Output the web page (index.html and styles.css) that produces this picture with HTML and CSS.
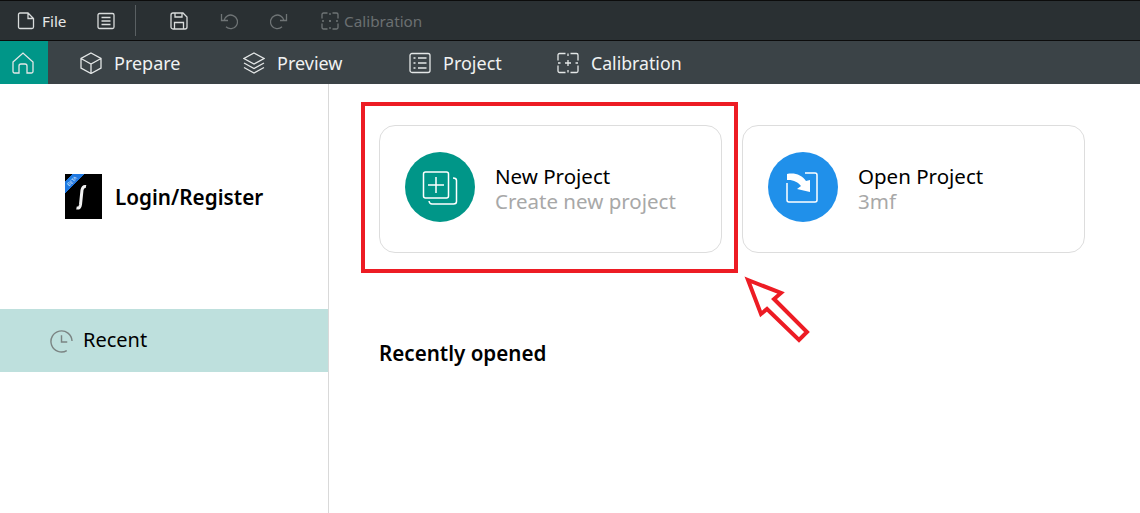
FILE: index.html
```html
<!DOCTYPE html>
<html lang="en">

<head>
  <meta charset="UTF-8">
  <title>Home</title>
  <link rel="stylesheet" href="styles.css">
</head>

<body>
  <!-- top toolbar -->
  <div class="toolbar">
    <div class="tool tool-file">
      <svg class="ico" viewBox="0 0 18 18"><path d="M1.500 2.500a1.500 1.500 0 0 1 1.500-1.500h8l5.500 5.500v8.500a1.500 1.500 0 0 1-1.500 1.500h-12a1.500 1.500 0 0 1-1.500-1.500zM11 1v5.500h5.500"/></svg>
      <span>File</span>
    </div>
    <div class="tool tool-list">
      <svg class="ico" viewBox="0 0 18 18"><rect x="1" y="1.500" width="16" height="15" rx="1.500"/><path d="M4.500 5.500h9M4.500 9h9M4.500 12.500h9"/></svg>
    </div>
    <div class="divider"></div>
    <div class="tool tool-save">
      <svg class="ico" viewBox="0 0 18 18"><path d="M1 3a2 2 0 0 1 2-2h10l4 4v10a2 2 0 0 1-2 2H3a2 2 0 0 1-2-2zM5 1v4h7V1M4.500 17v-6.500h9V17"/></svg>
    </div>
    <div class="tool tool-undo off">
      <svg class="ico" viewBox="0 0 18 18"><path d="M4 8.500A6.800 6.800 0 1 1 6 14.800M1.500 2v6.500H8"/></svg>
    </div>
    <div class="tool tool-redo off">
      <svg class="ico" viewBox="0 0 18 18"><path d="M14 8.500A6.800 6.800 0 1 0 12 14.800M16.500 2v6.500H10"/></svg>
    </div>
    <div class="tool tool-calib off">
      <svg class="ico" viewBox="0 0 18 18"><path d="M6.500 1H2.500A1.500 1.500 0 0 0 1 2.500V6.500M11.500 1h4A1.500 1.500 0 0 1 17 2.500V6.500M6.500 17H2.500A1.500 1.500 0 0 1 1 15.500V11.500M11.500 17h4a1.500 1.500 0 0 0 1.500-1.500V11.500M8 9h2M9 8v2M9 1v2M9 15v2M1 9h2M15 9h2"/></svg>
      <span>Calibration</span>
    </div>
  </div>

  <!-- tabs -->
  <nav class="tabs">
    <div class="tab-home">
      <svg class="tab-ico" viewBox="0 0 22 22"><path d="M1 10 11 1l10 9v9.500a1.500 1.500 0 0 1-1.500 1.500H15v-7a2 2 0 0 0-2-2H9a2 2 0 0 0-2 2v7H2.500A1.500 1.500 0 0 1 1 19.500z"/></svg>
    </div>
    <div class="tab tab-prepare">
      <svg class="tab-ico" viewBox="0 0 22 22"><path d="M11 1l10 5.500v9.500l-10 5.500-10-5.500V6.500zM1 6.500l10 5.500 10-5.500M11 12v9"/></svg>
      <span>Prepare</span>
    </div>
    <div class="tab tab-preview">
      <svg class="tab-ico" viewBox="0 0 22 22"><path d="M11 1l10 5.500-10 5.500-10-5.500zM1 11l10 5.500 10-5.500M1 15.500 11 21l10-5.500"/></svg>
      <span>Preview</span>
    </div>
    <div class="tab tab-project">
      <svg class="tab-ico" viewBox="0 0 22 22"><rect x="1" y="1.500" width="20" height="19" rx="2"/><path d="M4.500 6h2M9 6h8.500M4.500 11h2M9 11h8.500M4.500 16h2M9 16h8.500"/></svg>
      <span>Project</span>
    </div>
    <div class="tab">
      <svg class="tab-ico" viewBox="0 0 22 22"><path d="M8.500 1.500H2.500a1.500 1.500 0 0 0-1.500 1.500v5.500M13.500 1.500h6a1.500 1.500 0 0 1 1.500 1.500v5.500M8.500 20.500H2.500a1.500 1.500 0 0 1-1.500-1.500v-5.500M13.500 20.500h6a1.500 1.500 0 0 0 1.500-1.500v-5.500M8 11h6M11 8v6M11 1.500v2.500M11 18v2.500M1 11h2.500M18.500 11H21"/></svg>
      <span class="tab-calib">Calibration</span>
    </div>
  </nav>

  <div class="page">
    <aside class="side">
      <div class="login">
        <div class="logo">
          <span class="beta">BETA</span>
          <svg class="logo-s" viewBox="0 0 37 45"><path d="M21 12.500c-2.500-.5-3.500 1-4 3.500l-1.500 14.500c-.4 3-1.500 4-4 3.500"/></svg>
        </div>
        <span class="login-text">Login/Register</span>
      </div>
      <div class="recent">
        <svg class="recent-ico" viewBox="0 0 24 24"><path d="M17.500 22A11 11 0 1 1 23 12M12 6v7h6"/></svg>
        <span>Recent</span>
      </div>
    </aside>

    <main class="main">
      <div class="cards">
        <div class="card">
          <div class="circle green">
            <svg class="circle-ico" viewBox="0 0 36 36"><rect x="1.500" y="3" width="25" height="26" rx="2"/><path d="M14 8v16M6 16h16M31 9q3.500 0 3.500 2.500v21q0 2.500-3 2.500H10q-2.500 0-3-3"/></svg>
          </div>
          <div class="card-text">
            <div class="card-title">New Project</div>
            <div class="card-sub">Create new project</div>
          </div>
        </div>
        <div class="card">
          <div class="circle blue">
            <svg class="circle-ico" viewBox="0 0 36 36"><path d="M2 14V31a2 2 0 0 0 2 2H30a2 2 0 0 0 2-2V6a2 2 0 0 0-2-2H20"/><path class="fill" d="M2 5c8-1.500 15 1 19 7l4-1v12l-13-3 4-3C13 13 8 10.500 2 11z"/></svg>
          </div>
          <div class="card-text">
            <div class="card-title">Open Project</div>
            <div class="card-sub">3mf</div>
          </div>
        </div>
      </div>
      <h2 class="recent-head">Recently opened</h2>
    </main>
  </div>

  <!-- annotation on top of the screenshot -->
  <div class="mark-box"></div>
  <svg class="mark-arrow" viewBox="0 0 70 70"><path d="M5 5 38 18 31 24 64 57 56 65 24 34 18 39z"/></svg>
</body>

</html>
```

FILE: styles.css
```css
* {
  padding: 0;
  margin: 0;
  box-sizing: border-box;
}

html,
body {
  height: 100%;
  overflow: hidden;
}

body {
  display: flex;
  flex-direction: column;
  position: relative;
  background-color: #ffffff;
  font-family: "Noto Sans", "Open Sans", "Liberation Sans", sans-serif;
  color: #000000;
}

/* toolbar */
.toolbar {
  height: 41px;
  display: flex;
  align-items: center;
  padding-left: 17px;
  background-color: #2a3033;
  border-top: 1px solid #0c0c0c;
  border-bottom: 1px solid #0c0c0c;
  color: #e6e8e8;
  font-size: 15.300px;
}

.tool {
  display: flex;
  align-items: center;
  gap: 7px;
}

.ico {
  width: 18px;
  height: 18px;
  fill: none;
  stroke: #d9dcdc;
  stroke-width: 1.300;
}

.tool-file {
  width: 80px;
}

.divider {
  width: 1px;
  height: 31px;
  margin: 0 34px 0 20px;
  background-color: #5a6063;
}

.tool-save,
.tool-undo {
  width: 50px;
}

.tool-redo {
  width: 51px;
}

.tool-calib {
  gap: 5px;
}

.off {
  color: #6a6f71;
}

.off .ico {
  stroke: #6f7476;
}

/* tabs */
.tabs {
  height: 43px;
  display: flex;
  align-items: center;
  background-color: #3b4347;
  color: #f0f2f2;
  font-size: 18px;
}

.tab-home {
  width: 48px;
  height: 100%;
  display: flex;
  align-items: center;
  padding-left: 12px;
  margin-right: 32px;
  background-color: #009688;
}

.tab {
  display: flex;
  align-items: center;
  gap: 12px;
}

.tab-ico {
  width: 22px;
  height: 22px;
  flex-shrink: 0;
  fill: none;
  stroke: #e4e7e7;
  stroke-width: 1.300;
}

.tab-prepare {
  width: 163px;
}

.tab-preview {
  width: 166px;
}

.tab-project {
  width: 148px;
}

.tab-calib {
  font-size: 17.700px;
}

/* page */
.page {
  flex: 1;
  display: flex;
}

.side {
  width: 329px;
  border-right: 1px solid #d9d9d9;
}

.login {
  height: 225px;
  display: flex;
  align-items: center;
  gap: 13px;
  padding-left: 65px;
}

.logo {
  position: relative;
  width: 37px;
  height: 45px;
  background: linear-gradient(135deg, #000000 0 5px, #1f78e0 5px 14px, #000000 14px);
}

.beta {
  position: absolute;
  top: 3px;
  left: 1px;
  font-size: 5px;
  line-height: 8px;
  color: #dfeaff;
  transform: rotate(-45deg);
}

.logo-s {
  display: block;
  width: 37px;
  height: 45px;
  fill: none;
  stroke: #f2f2f2;
  stroke-width: 3;
}

.login-text {
  font-size: 20.700px;
  font-weight: 600;
}

.recent {
  height: 63px;
  display: flex;
  align-items: center;
  gap: 10px;
  padding: 0 0 2px 50px;
  background-color: #bee0dd;
  font-size: 20px;
}

.recent-ico {
  width: 23px;
  height: 24px;
  margin-top: 2px;
  fill: none;
  stroke: #7b8483;
  stroke-width: 1.500;
}

.main {
  flex: 1;
  padding: 41px 0 0 50px;
}

.cards {
  display: flex;
  gap: 20px;
}

.card {
  width: 343px;
  height: 128px;
  display: flex;
  align-items: center;
  gap: 20px;
  padding-left: 25px;
  border: 1px solid #dddddd;
  border-radius: 16px;
}

.circle {
  width: 70px;
  height: 70px;
  margin-bottom: 4px;
  display: flex;
  align-items: center;
  justify-content: center;
  border-radius: 50%;
}

.green {
  background-color: #009688;
}

.blue {
  background-color: #2090ea;
}

.circle-ico {
  width: 36px;
  height: 36px;
  fill: none;
  stroke: #ffffff;
  stroke-width: 1.500;
}

.circle-ico .fill {
  fill: #ffffff;
  stroke: none;
}

.card-title {
  font-size: 20.500px;
  line-height: 25px;
}

.card-sub {
  font-size: 20.500px;
  line-height: 25px;
  color: #a8a8a8;
}

.recent-head {
  margin-top: 86px;
  font-size: 20.600px;
  line-height: 28px;
  font-weight: 600;
}

/* annotation */
.mark-box {
  position: absolute;
  left: 361px;
  top: 102px;
  width: 377px;
  height: 171px;
  border: 4px solid #ed1c24;
}

.mark-arrow {
  position: absolute;
  left: 743px;
  top: 275px;
  width: 70px;
  height: 70px;
  fill: #ffffff;
  stroke: #ed1c24;
  stroke-width: 4;
}
```
